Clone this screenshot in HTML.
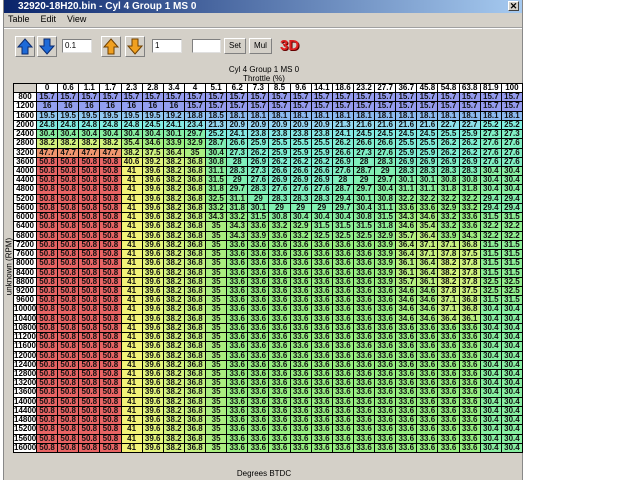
<!DOCTYPE html>
<html><head><meta charset="utf-8"><style>
*{margin:0;padding:0;box-sizing:border-box}
body{width:640px;height:480px;background:#fff;position:relative;overflow:hidden;font-family:"Liberation Sans",sans-serif}
#win{position:absolute;left:3px;top:0;width:520px;height:480px;background:#d4d0c8;border-left:1px solid #888;border-right:1px solid #888}
#title{position:absolute;left:0;top:0;width:100%;height:13px;background:linear-gradient(90deg,#0a246a,#a6caf0);color:#fff;font-size:10px;font-weight:bold;line-height:13px;padding-left:14px}
#x{position:absolute;right:3px;top:1px;width:11px;height:10px;background:#d4d0c8;border:1px solid #fff;border-right-color:#404040;border-bottom-color:#404040;color:#000;font-size:9px;line-height:8px;text-align:center}
#menu{position:absolute;top:14px;left:4px;font-size:9px;color:#000}
#menu span{margin-right:11px}
#sep{position:absolute;top:27px;left:0;width:100%;border-top:1px solid #a0a0a0;border-bottom:1px solid #fff}
.btn{position:absolute;top:36px;width:20px;height:21px;background:#d4d0c8;border:1px solid #fff;border-right-color:#808080;border-bottom-color:#808080}
.inp{position:absolute;top:39px;height:14px;background:#fff;border:1px solid #808080;border-right-color:#e0e0e0;border-bottom-color:#e0e0e0;font-size:8px;line-height:12px;padding-left:2px}
.tb{position:absolute;top:38px;height:16px;border:1px solid #fff;border-right-color:#808080;border-bottom-color:#808080;font-size:8px;line-height:14px;text-align:center;color:#000}
#d3{position:absolute;left:276px;top:37px;font-size:15px;font-weight:bold;color:#e02020;text-shadow:1px 1px 0 #600}
.cap{position:absolute;left:0;width:520px;text-align:center;font-size:8px;color:#000}
#grid{position:absolute;left:9px;top:83px;width:510px;height:370px;background:#000;display:grid;grid-template-columns:22px repeat(23,1fr);grid-template-rows:repeat(40,1fr);gap:1px;padding:1px}
#grid div{font-size:8px;font-weight:bold;text-align:center;line-height:8px;color:#111;overflow:hidden;white-space:nowrap}
#grid .h,#grid .l{background:#fff;color:#000}
#grid .c{background:#d4d0c8}
#ylab{position:absolute;left:-25px;top:262px;transform:rotate(-90deg);font-size:8px;width:60px;text-align:center}
</style></head><body>
<div id="win">
<div id="title">32920-18H20.bin - Cyl 4 Group 1 MS 0<div id="x">✕</div></div>
<div id="menu"><span>Table</span><span>Edit</span><span>View</span></div>
<div id="sep"></div>
<div class="btn" style="left:11px"><svg width="18" height="19"><path d="M9 2 L16 10 L12 10 L12 17 L6 17 L6 10 L2 10 Z" fill="#1e6ad8" stroke="#0a2a70"/></svg></div>
<div class="btn" style="left:33px"><svg width="18" height="19"><path d="M9 17 L16 9 L12 9 L12 2 L6 2 L6 9 L2 9 Z" fill="#1e6ad8" stroke="#0a2a70"/></svg></div>
<div class="inp" style="left:58px;width:30px">0.1</div>
<div class="btn" style="left:97px"><svg width="18" height="19"><path d="M9 2 L16 10 L12 10 L12 17 L6 17 L6 10 L2 10 Z" fill="#f0a020" stroke="#704000"/></svg></div>
<div class="btn" style="left:121px"><svg width="18" height="19"><path d="M9 17 L16 9 L12 9 L12 2 L6 2 L6 9 L2 9 Z" fill="#f0a020" stroke="#704000"/></svg></div>
<div class="inp" style="left:148px;width:30px">1</div>
<div class="inp" style="left:188px;width:29px"></div>
<div class="tb" style="left:220px;width:22px">Set</div>
<div class="tb" style="left:245px;width:23px">Mul</div>
<div id="d3">3D</div>
<div class="cap" style="top:65px">Cyl 4 Group 1 MS 0</div>
<div class="cap" style="top:74px">Throttle (%)</div>
<div id="ylab">unknown (RPM)</div>
<div class="cap" style="top:469px">Degrees BTDC</div>
<div id="grid"></div>
</div>
<script>
var H=["0","0.6","1.1","1.7","2.3","2.8","3.4","4","5.1","6.2","7.3","8.5","9.6","14.1","18.6","23.2","27.7","36.7","45.8","54.8","63.8","81.9","100"];
function rep(v,n){var a=[];for(var i=0;i<n;i++)a.push(v);return a}
var R=[];
R.push(rep("15.7",23));
R.push(rep("16",7).concat(rep("15.7",16)));
R.push(rep("19.5",6).concat(["19.2","18.8","18.5"],rep("18.1",14)));
R.push("24.8 24.8 24.8 24.8 24.8 24.5 24.1 23.4 21.3 20.9 20.9 20.9 20.9 20.9 21.3 21.6 21.6 21.6 21.6 22.7 22.7 25.2 25.2".split(" "));
R.push("30.4 30.4 30.4 30.4 30.4 30.4 30.1 29.7 25.2 24.1 23.8 23.8 23.8 23.8 24.1 24.5 24.5 24.5 24.5 25.5 25.9 27.3 27.3".split(" "));
R.push("38.2 38.2 38.2 38.2 35.4 34.6 33.9 32.9 28.7 26.6 25.9 25.5 25.5 25.5 26.2 26.6 26.6 25.5 25.5 26.2 26.2 27.6 27.6".split(" "));
R.push("47.7 47.7 47.7 47.7 38.2 37.5 36.4 35 30.4 27.3 26.2 25.9 25.9 25.9 26.6 27.3 27.6 25.9 25.9 26.2 26.2 27.6 27.6".split(" "));
R.push("50.8 50.8 50.8 50.8 40.6 39.2 38.2 36.8 30.8 28 26.9 26.2 26.2 26.2 26.9 28 28.3 26.9 26.9 26.9 26.9 27.6 27.6".split(" "));
var P="50.8 50.8 50.8 50.8 41 39.6 38.2 36.8 ";
["31.1 28.3 27.3 26.6 26.6 26.6 27.6 28.7 29 28.3 28.3 28.3 28.3 30.4 30.4",
"31.5 29 27.6 26.9 26.9 26.9 28 29 29.7 30.1 30.1 30.8 30.8 30.4 30.4",
"31.8 29.7 28.3 27.6 27.6 27.6 28.7 29.7 30.4 31.1 31.1 31.8 31.8 30.4 30.4",
"32.5 31.1 29 28.3 28.3 28.3 29.4 30.1 30.8 32.2 32.2 32.2 32.2 29.4 29.4",
"33.2 31.8 30.1 29 29 29 29.7 30.4 31.1 33.6 33.6 32.9 33.2 29.4 29.4",
"34.3 33.2 31.5 30.8 30.4 30.4 30.4 30.8 31.5 34.3 34.6 33.2 33.6 31.5 31.5",
"35 34.3 33.6 33.2 32.9 31.5 31.5 31.5 31.8 34.6 35.4 33.2 33.6 32.2 32.2",
"35 34.3 33.9 33.6 33.2 32.5 32.5 32.5 32.9 35.7 36.4 33.9 34.3 32.2 32.2",
"35 33.6 33.6 33.6 33.6 33.6 33.6 33.6 33.9 36.4 37.1 37.1 36.8 31.5 31.5",
"35 33.6 33.6 33.6 33.6 33.6 33.6 33.6 33.9 36.4 37.1 37.8 37.5 31.5 31.5",
"35 33.6 33.6 33.6 33.6 33.6 33.6 33.6 33.9 36.1 36.4 38.2 37.8 31.5 31.5",
"35 33.6 33.6 33.6 33.6 33.6 33.6 33.6 33.9 36.1 36.4 38.2 37.8 31.5 31.5",
"35 33.6 33.6 33.6 33.6 33.6 33.6 33.6 33.9 35.7 36.1 38.2 37.8 32.5 32.5",
"35 33.6 33.6 33.6 33.6 33.6 33.6 33.6 33.6 34.6 34.6 37.8 37.5 32.5 32.5",
"35 33.6 33.6 33.6 33.6 33.6 33.6 33.6 33.6 34.6 34.6 37.1 36.8 31.5 31.5",
"35 33.6 33.6 33.6 33.6 33.6 33.6 33.6 33.6 34.6 34.6 37.1 36.8 30.4 30.4",
"35 33.6 33.6 33.6 33.6 33.6 33.6 33.6 33.6 34.6 34.6 36.4 36.1 30.4 30.4"].forEach(function(s){R.push((P+s).split(" "))});
while(R.length<39)R.push((P+"35 33.6 33.6 33.6 33.6 33.6 33.6 33.6 33.6 33.6 33.6 33.6 33.6 30.4 30.4").split(" "));
var stops=[[15,150,146,238],[18,140,184,240],[21,150,214,242],[25,128,238,224],[29,128,238,176],[33.6,150,238,128],[36.8,196,240,128],[39.6,226,244,124],[41,242,242,120],[47.7,240,150,110],[50.8,232,100,100]];
function col(v){if(v<=stops[0][0])return stops[0].slice(1);for(var i=1;i<stops.length;i++){if(v<=stops[i][0]){var a=stops[i-1],b=stops[i],t=(v-a[0])/(b[0]-a[0]);return [0,1,2].map(function(k){return Math.round(a[k+1]+(b[k+1]-a[k+1])*t)})}}return stops[stops.length-1].slice(1)}
var g=document.getElementById('grid'),h='<div class="c"></div>';
H.forEach(function(x){h+='<div class="h">'+x+'</div>'});
R.forEach(function(r,i){h+='<div class="l">'+(800+400*i)+'</div>';r.forEach(function(v){var c=col(parseFloat(v));h+='<div style="background:rgb('+c.join(',')+')">'+v+'</div>'})});
g.innerHTML=h;
</script>
</body></html>
